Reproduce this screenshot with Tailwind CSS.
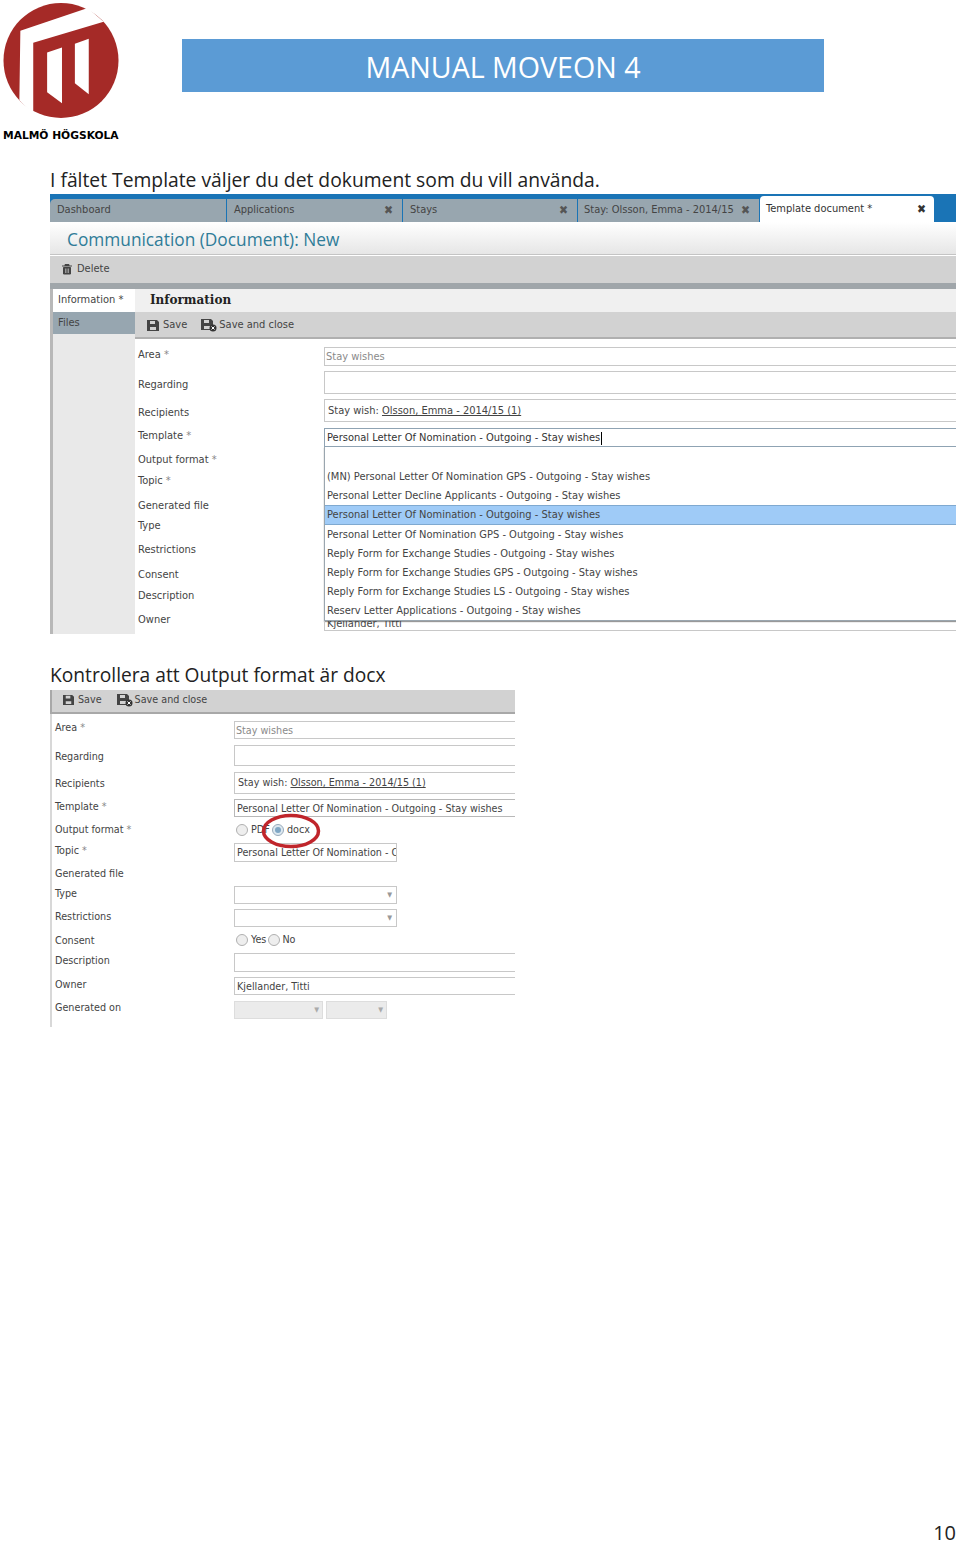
<!DOCTYPE html>
<html lang="sv">
  <head>
    <meta charset="UTF-8" />
    <title>Manual MoveOn 4</title>
    <script src="https://cdn.jsdelivr.net/npm/@tailwindcss/browser@4"></script>
  </head>
  <body class="bg-white font-['Open_Sans',sans-serif] text-[#333]">
    <div class="relative h-[1543px] w-[960px] overflow-hidden">
      <!-- HEADER -->
      <header class="flex h-[165px]">
        <div class="ml-[3px] w-[116px] pt-[3px]">
          <svg viewBox="0 0 116 116" class="block h-[115px] w-[116px]">
            <circle cx="58" cy="58" r="58" fill="#a52a27" />
            <polygon points="17,28 85,5 101,19 30,40 30,112 16,98" fill="#fff" />
            <polygon points="44,50 59,45 59,101 44,90" fill="#fff" />
            <polygon points="72,41 86,36 86,92 72,81" fill="#fff" />
          </svg>
          <div class="mt-[11px] font-['DejaVu_Sans',sans-serif] text-[10.7px] leading-[14px] font-bold whitespace-nowrap text-black">MALMÖ HÖGSKOLA</div>
        </div>
        <div class="mt-[39px] ml-[63px] flex h-[53px] w-[642px] items-center justify-center bg-[#5b9bd5] pt-[3px] text-[28.6px] text-white">MANUAL MOVEON 4</div>
      </header>

      <main class="pl-[50px]">
        <p class="h-[29px] text-[19.3px] leading-[29px] text-[#222]">I fältet Template väljer du det dokument som du vill använda.</p>

        <!-- FIRST SCREENSHOT -->
        <section class="relative h-[440px] w-[906px] overflow-hidden bg-white font-['DejaVu_Sans',sans-serif] text-[11px] leading-4 whitespace-nowrap text-[#444] font-stretch-condensed">
          <div class="flex h-[28px] items-end bg-[#1a74b6] pt-[4px]">
            <div class="flex h-[23px] w-[177px] items-center rounded-tl-[5px] border-r border-[#1a74b6] bg-[#98a6af] pb-[2px] pl-[7px]">Dashboard</div>
            <div class="flex h-[23px] w-[176px] items-center justify-between border-r border-[#1a74b6] bg-[#98a6af] px-[9px] pb-[2px] pl-[7px]">Applications<span class="text-[12px] text-[#555]">✖</span></div>
            <div class="flex h-[23px] w-[175px] items-center justify-between border-r border-[#1a74b6] bg-[#98a6af] px-[9px] pb-[2px] pl-[7px]">Stays<span class="text-[12px] text-[#555]">✖</span></div>
            <div class="flex h-[23px] w-[182px] items-center justify-between border-r border-[#1a74b6] bg-[#98a6af] pr-[9px] pb-[2px] pl-[6px]">Stay: Olsson, Emma - 2014/15<span class="text-[12px] text-[#555]">✖</span></div>
            <div class="flex h-[26px] w-[174px] items-center justify-between rounded-t-[4px] bg-white pr-[8px] pl-[6px] text-[#333]">Template document *<span class="text-[12px]">✖</span></div>
          </div>
          <div class="flex h-[33px] items-center border-b border-[#c4c4c4] bg-gradient-to-b from-white to-[#e6e6e6] pt-[3px] pl-[17px] font-['Open_Sans',sans-serif] text-[17.3px] text-[#2f7c98] font-stretch-normal">Communication (Document): New</div>
          <div class="mt-[1px] flex h-[27px] items-center gap-[4px] bg-[#d2d2d2] pb-[2px] pl-[11px]">
            <svg viewBox="0 0 12 12" class="h-[12px] w-[12px]"><path d="M1 3h10M4 3V1.5h4V3M2.5 4.5h7V11h-7z" fill="#444" stroke="#444" /><path d="M4.5 5.5v4.5M6 5.5v4.5M7.5 5.5v4.5" stroke="#d2d2d2" stroke-width=".6" /></svg>
            Delete
          </div>
          <div class="h-[6px] bg-[#a0a6aa]"></div>
          <div class="flex h-[345px]">
            <div class="w-[3px] shrink-0 bg-[#b8b8b8]"></div>
            <div class="w-[82px] shrink-0 bg-[#e9e9e9]">
              <div class="flex h-[23px] items-center bg-white pb-[1px] pl-[5px]">Information *</div>
              <div class="flex h-[22px] items-center bg-[#97a6b0] pb-[1px] pl-[5px]">Files</div>
            </div>
            <div class="min-w-0 flex-1">
              <div class="flex h-[23px] items-center bg-[#f0f0f0] pb-[2px] pl-[15px] font-['DejaVu_Serif',serif] text-[12px] font-bold text-[#222] font-stretch-normal">Information</div>
              <div class="flex h-[27px] items-center gap-[4px] border-b-2 border-[#b0b0b0] bg-[#d2d2d2] pt-[1px] pl-[12px]">
                <svg viewBox="0 0 12 12" class="h-[12px] w-[12px]"><path d="M0 1h10l2 2v9H0z" fill="#444" /><path d="M3 2h5v3H3zM3 8h6v3H3z" fill="#d2d2d2" /></svg>
                <span>Save</span>
                <svg viewBox="0 0 16 14" class="ml-[10px] h-[14px] w-[16px]"><path d="M0 1h10l2 2v9H0z" fill="#444" /><path d="M3 2h5v3H3zM3 8h6v3H3z" fill="#d2d2d2" /><circle cx="12" cy="10" r="3.5" fill="#333" /><path d="M10.5 8.5l3 3m0-3l-3 3" stroke="#fff" /></svg>
                <span class="-ml-[2px]">Save and close</span>
              </div>
              <div class="flex">
                <div class="w-[189px] shrink-0 pt-[8px] pl-[3px]">
                  <div class="h-[30px]">Area <span class="text-[#888]">*</span></div>
                  <div class="h-[28px]">Regarding</div>
                  <div class="h-[23px]">Recipients</div>
                  <div class="h-[24px]">Template <span class="text-[#888]">*</span></div>
                  <div class="h-[21px]">Output format <span class="text-[#888]">*</span></div>
                  <div class="h-[25px]">Topic <span class="text-[#888]">*</span></div>
                  <div class="h-[20px]">Generated file</div>
                  <div class="h-[24px]">Type</div>
                  <div class="h-[25px]">Restrictions</div>
                  <div class="h-[21px]">Consent</div>
                  <div class="h-[24px]">Description</div>
                  <div class="h-[16px]">Owner</div>
                </div>
                <div class="min-w-0 flex-1 pt-[8px]">
                  <div class="flex h-[19px] items-center border border-r-0 border-[#c8c8c8] pt-[1px] pl-[1px] text-[#8a8a8a]">Stay wishes</div>
                  <div class="mt-[5px] h-[23px] border border-r-0 border-[#c8c8c8]"></div>
                  <div class="mt-[5px] flex h-[23px] items-center border border-r-0 border-[#c8c8c8] pt-[1px] pl-[3px]">Stay wish:&nbsp;<span class="underline">Olsson, Emma - 2014/15 (1)</span></div>
                </div>
              </div>
            </div>
          </div>
          <!-- open template dropdown -->
          <div class="absolute top-[234px] left-[274px] w-[632px]">
            <div class="flex h-[19px] items-center border border-r-0 border-[#8fa3b3] pt-[1px] pl-[2px] text-[#333]">Personal Letter Of Nomination - Outgoing - Stay wishes<span class="ml-[1px] h-[13px] w-px bg-black"></span></div>
            <div class="h-[174px] border-b border-l border-[#9aa6af] bg-white pt-[20px] text-[#444] shadow-[0_1px_1px_#999]">
              <div class="flex h-[19.2px] items-center pt-[1px] pl-[2px]">(MN) Personal Letter Of Nomination GPS - Outgoing - Stay wishes</div>
              <div class="flex h-[19.2px] items-center pt-[1px] pl-[2px]">Personal Letter Decline Applicants - Outgoing - Stay wishes</div>
              <div class="flex h-[19.2px] items-center border-y border-[#7fa9d0] bg-[#9fcbf7] pt-[1px] pl-[2px]">Personal Letter Of Nomination - Outgoing - Stay wishes</div>
              <div class="flex h-[19.2px] items-center pt-[1px] pl-[2px]">Personal Letter Of Nomination GPS - Outgoing - Stay wishes</div>
              <div class="flex h-[19.2px] items-center pt-[1px] pl-[2px]">Reply Form for Exchange Studies - Outgoing - Stay wishes</div>
              <div class="flex h-[19.2px] items-center pt-[1px] pl-[2px]">Reply Form for Exchange Studies GPS - Outgoing - Stay wishes</div>
              <div class="flex h-[19.2px] items-center pt-[1px] pl-[2px]">Reply Form for Exchange Studies LS - Outgoing - Stay wishes</div>
              <div class="flex h-[19.2px] items-center pt-[1px] pl-[2px]">Reserv Letter Applications - Outgoing - Stay wishes</div>
            </div>
            <div class="h-[10px] overflow-hidden border-b border-l border-[#c8c8c8] pl-[2px] leading-[6px]">Kjellander, Titti</div>
          </div>
        </section>

        <p class="mt-[26px] h-[30px] text-[19.2px] leading-[29px] text-[#222]">Kontrollera att Output format är docx</p>

        <!-- SECOND SCREENSHOT -->
        <section class="relative h-[337px] w-[465px] overflow-hidden font-['DejaVu_Sans',sans-serif] text-[10.7px] leading-4 whitespace-nowrap text-[#444] font-stretch-condensed">
          <div class="flex h-[24px] items-center gap-[4px] border-b-2 border-l-2 border-b-[#a8a8a8] border-l-[#a8a8a8] bg-[#d2d2d2] pb-[3px] pl-[11px]">
            <svg viewBox="0 0 12 12" class="h-[11px] w-[11px]"><path d="M0 1h10l2 2v9H0z" fill="#444" /><path d="M3 2h5v3H3zM3 8h6v3H3z" fill="#d2d2d2" /></svg>
            <span>Save</span>
            <svg viewBox="0 0 16 14" class="ml-[11px] h-[14px] w-[16px]"><path d="M0 1h10l2 2v9H0z" fill="#444" /><path d="M3 2h5v3H3zM3 8h6v3H3z" fill="#d2d2d2" /><circle cx="12" cy="10" r="3.5" fill="#333" /><path d="M10.5 8.5l3 3m0-3l-3 3" stroke="#fff" /></svg>
            <span class="-ml-[2px]">Save and close</span>
          </div>
          <div class="flex h-[313px] border-l-2 border-[#d8d8d8]">
            <div class="w-[182px] shrink-0 pt-[6px] pl-[3px]">
              <div class="h-[29px]">Area <span class="text-[#888]">*</span></div>
              <div class="h-[27px]">Regarding</div>
              <div class="h-[23px]">Recipients</div>
              <div class="h-[23px]">Template <span class="text-[#888]">*</span></div>
              <div class="h-[21px]">Output format <span class="text-[#888]">*</span></div>
              <div class="h-[23px]">Topic <span class="text-[#888]">*</span></div>
              <div class="h-[20px]">Generated file</div>
              <div class="h-[23px]">Type</div>
              <div class="h-[24px]">Restrictions</div>
              <div class="h-[20px]">Consent</div>
              <div class="h-[24px]">Description</div>
              <div class="h-[23px]">Owner</div>
              <div class="h-[16px]">Generated on</div>
            </div>
            <div class="min-w-0 flex-1 pt-[7px]">
              <div class="flex h-[18px] items-center border border-r-0 border-[#c8c8c8] pt-[1px] pl-[1px] text-[#8a8a8a]">Stay wishes</div>
              <div class="mt-[6px] h-[21px] border border-r-0 border-[#c8c8c8]"></div>
              <div class="mt-[6px] flex h-[22px] items-center border border-r-0 border-[#c8c8c8] pl-[3px]">Stay wish:&nbsp;<span class="underline">Olsson, Emma - 2014/15 (1)</span></div>
              <div class="mt-[5px] flex h-[18px] items-center border border-r-0 border-[#b8b8b8] pt-[1px] pl-[2px]">Personal Letter Of Nomination - Outgoing - Stay wishes</div>
              <div class="mt-[3px] flex h-[20px] items-center pl-[2px]">
                <span class="h-[12px] w-[12px] rounded-full border border-[#b0b0b0] bg-[#eee]"></span>
                <span class="ml-[3px] w-[20px]">PDF</span>
                <span class="ml-[1px] flex h-[12px] w-[12px] items-center justify-center rounded-full border border-[#99aabb] bg-[#dde8f0]"><span class="h-[6px] w-[6px] rounded-full bg-[#7fa6c4]"></span></span>
                <span class="ml-[3px]">docx</span>
              </div>
              <div class="mt-[3px] flex h-[19px] w-[163px] items-center overflow-hidden border border-[#c8c8c8] pl-[2px]">Personal Letter Of Nomination - Outgoing</div>
              <div class="mt-[24px] flex h-[18px] w-[163px] items-center justify-end border border-[#c8c8c8] pr-[4px] text-[7px] text-[#999]">▼</div>
              <div class="mt-[5px] flex h-[18px] w-[163px] items-center justify-end border border-[#c8c8c8] pr-[4px] text-[7px] text-[#999]">▼</div>
              <div class="mt-[3px] flex h-[20px] items-center pl-[2px]">
                <span class="h-[12px] w-[12px] rounded-full border border-[#b0b0b0] bg-[#eee]"></span>
                <span class="ml-[3px]">Yes</span>
                <span class="ml-[2px] h-[12px] w-[12px] rounded-full border border-[#b0b0b0] bg-[#eee]"></span>
                <span class="ml-[2px]">No</span>
              </div>
              <div class="mt-[3px] h-[19px] border border-r-0 border-[#c8c8c8]"></div>
              <div class="mt-[5px] flex h-[18px] items-center border border-r-0 border-[#c8c8c8] pt-[1px] pl-[2px]">Kjellander, Titti</div>
              <div class="mt-[6px] flex gap-[3px]">
                <div class="flex h-[18px] w-[89px] items-center justify-end border border-[#dddddd] bg-[#ebebeb] pr-[3px] text-[7px] text-[#aaa]">▼</div>
                <div class="flex h-[18px] w-[61px] items-center justify-end border border-[#dddddd] bg-[#ebebeb] pr-[3px] text-[7px] text-[#aaa]">▼</div>
              </div>
            </div>
          </div>
          <!-- red marker round docx -->
          <svg viewBox="0 0 60 36" class="absolute top-[123px] left-[211px] h-[36px] w-[60px]" fill="none">
            <ellipse cx="30" cy="18" rx="27.5" ry="15.5" stroke="#c0252b" stroke-width="3.5" />
          </svg>
        </section>
      </main>

      <footer class="absolute right-[4px] bottom-0 text-[20px] leading-[20px] text-[#222]">10</footer>
    </div>
  </body>
</html>
